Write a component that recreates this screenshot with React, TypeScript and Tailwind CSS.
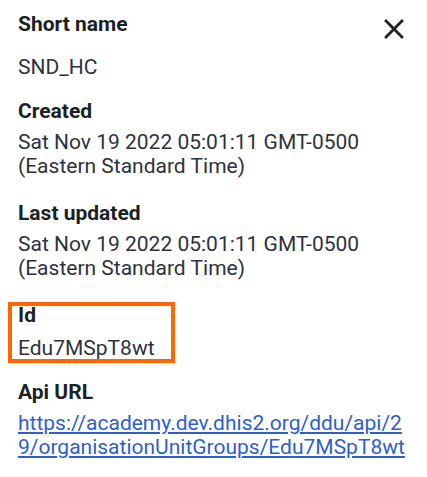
import React from 'react';

interface DetailItem {
  label: string;
  value: React.ReactNode;
  highlight?: boolean;
}

const CloseIcon = () => (
  <svg width="34" height="34" viewBox="0 0 24 24" fill="#1f2328">
    <path d="M19 6.41 17.59 5 12 10.59 6.41 5 5 6.41 10.59 12 5 17.59 6.41 19 12 13.41 17.59 19 19 17.59 13.41 12z" />
  </svg>
);

const App = () => {
  const apiUrl = 'https://academy.dev.dhis2.org/ddu/api/29/organisationUnitGroups/Edu7MSpT8wt';

  const items: DetailItem[] = [
    { label: 'Created', value: 'Sat Nov 19 2022 05:01:11 GMT-0500 (Eastern Standard Time)' },
    { label: 'Last updated', value: 'Sat Nov 19 2022 05:01:11 GMT-0500 (Eastern Standard Time)' },
    { label: 'Id', value: 'Edu7MSpT8wt', highlight: true },
    {
      label: 'Api URL',
      value: (
        <a href={apiUrl} className="text-[#2f5fc9] underline underline-offset-2 break-all">
          {apiUrl}
        </a>
      ),
    },
  ];

  return (
    <div
      className="w-[427px] h-[477px] bg-white pl-[18px] pr-[18px] pt-[12px] text-[21px] leading-6"
      style={{ fontFamily: 'Roboto, "Noto Sans", sans-serif' }}
    >
      {/* Header row: first field + close button */}
      <div className="flex justify-between items-start">
        <div>
          <div className="font-bold text-[#1b1f26]">Short name</div>
          <div className="mt-[19px] text-[#2d333b]">SND_HC</div>
        </div>
        <button className="-mr-[2px] mt-0">
          <CloseIcon />
        </button>
      </div>

      {items.map((item) => (
        <div
          key={item.label}
          className={
            item.highlight
              ? 'relative mt-[23px]'
              : item.label === 'Created'
              ? 'mt-[20px]'
              : item.label === 'Api URL'
              ? 'mt-[20px]'
              : 'mt-[23px]'
          }
        >
          {item.highlight && (
            <div className="absolute left-[-10px] top-[-1px] w-[167px] h-[61px] border-[4px] border-[#ff6600]" />
          )}
          <div className="font-bold text-[#1b1f26]">{item.label}</div>
          <div className={item.highlight ? 'mt-[9px] text-[#2d333b]' : 'mt-[7px] text-[#2d333b]'}>
            {item.value}
          </div>
        </div>
      ))}
    </div>
  );
};

export default App;
